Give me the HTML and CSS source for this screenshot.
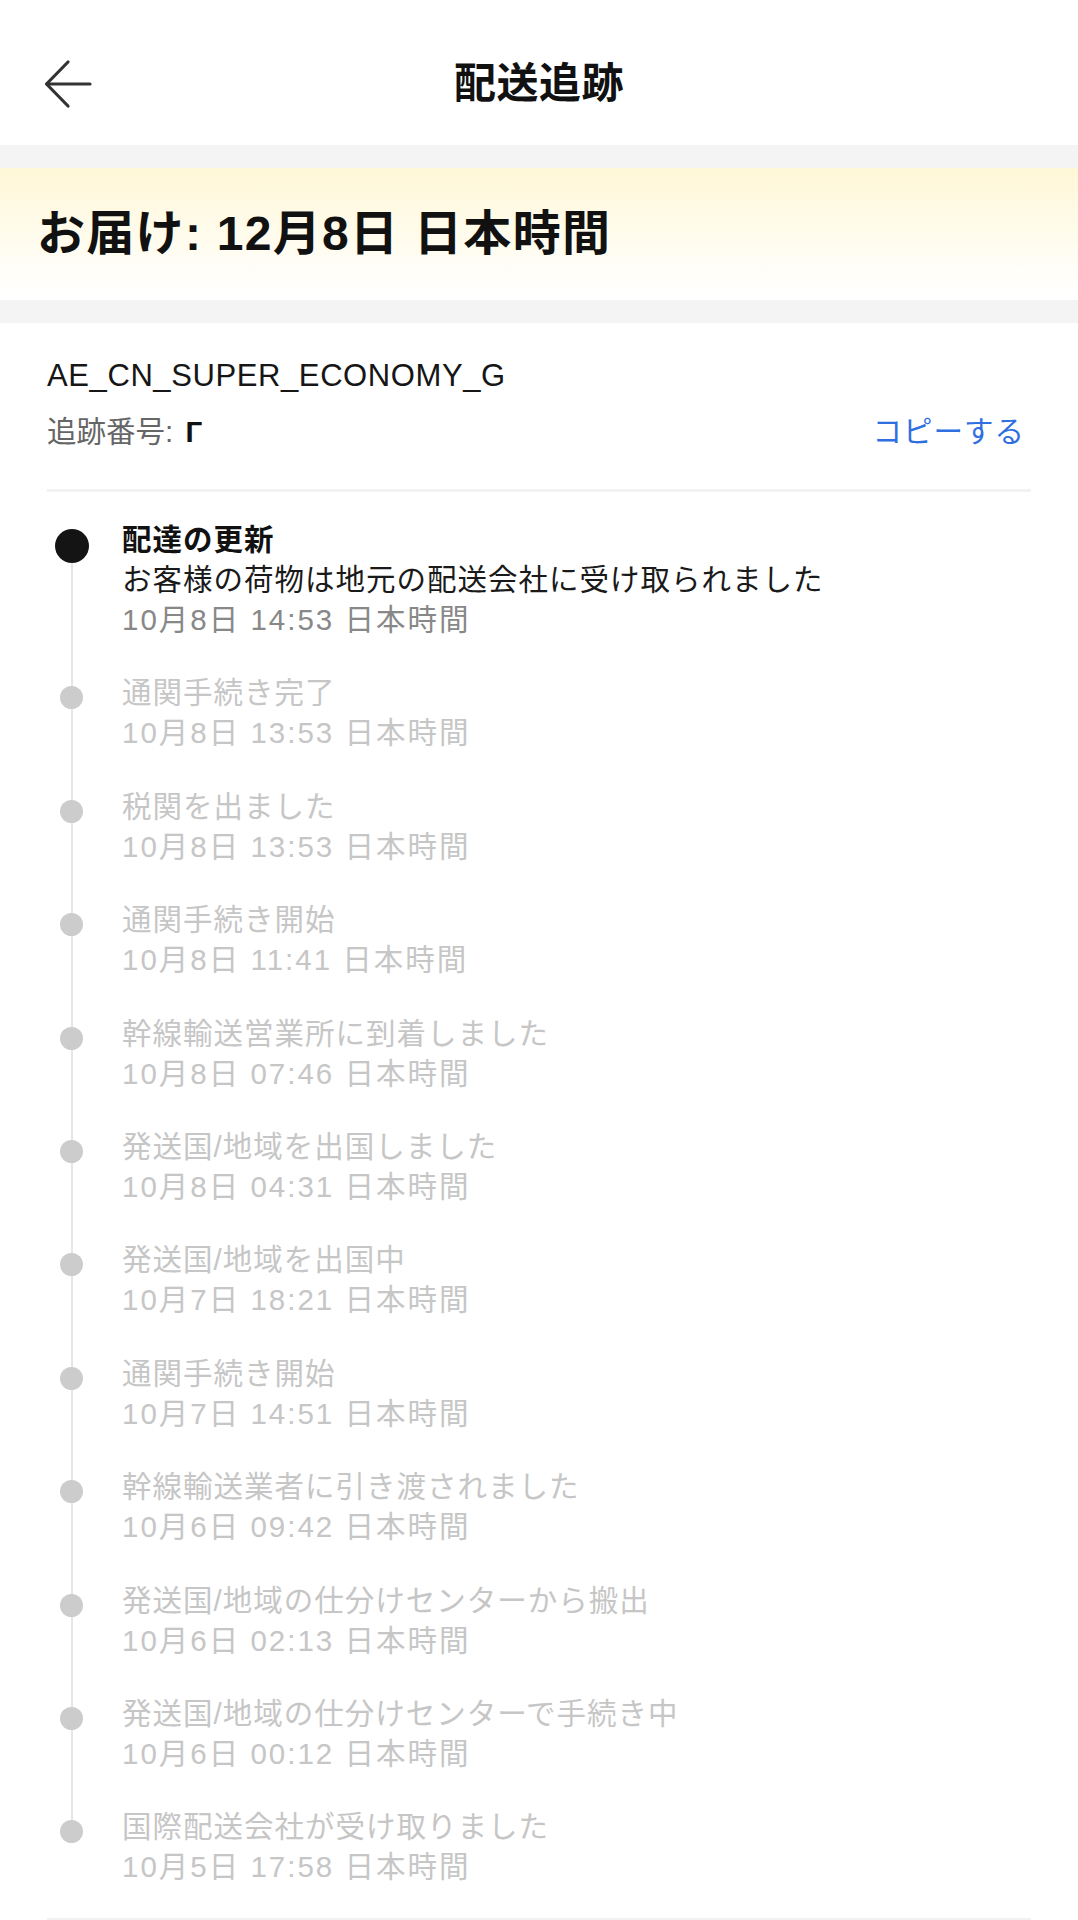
FILE: index.html
```html
<!DOCTYPE html>
<html lang="ja">
<head>
<meta charset="utf-8">
<title>配送追跡</title>
<link rel="stylesheet" href="styles.css">
</head>
<body>
<div class="page">
  <header class="topbar">
    <span class="back">
      <svg width="48" height="50" viewBox="0 0 48 50" fill="none" stroke="#333" stroke-width="3.2" stroke-linecap="round" stroke-linejoin="round">
        <path d="M46 25 H3"/>
        <path d="M24 3 L2.5 25 L24 47"/>
      </svg>
    </span>
    <h1 class="title">配送追跡</h1>
    <span></span>
  </header>
  <div class="band"></div>
  <section class="banner">
    <h2 class="eta">お届け: 12月8日 日本時間</h2>
  </section>
  <div class="band"></div>
  <section class="card">
    <div class="carrier">AE_CN_SUPER_ECONOMY_G</div>
    <div class="tracking">
      <span class="tno">追跡番号: <b class="redact">Г</b></span>
      <span class="copy">コピーする</span>
    </div>
    <div class="divider"></div>
    <ul class="timeline">
      <li class="item current">
        <div class="rail"><span class="dot"></span></div>
        <div class="content">
          <div class="line head">配達の更新</div>
          <div class="line desc">お客様の荷物は地元の配送会社に受け取られました</div>
          <div class="line date">10月8日 14:53 日本時間</div>
        </div>
      </li>
      <li class="item">
        <div class="rail"><span class="dot"></span></div>
        <div class="content">
          <div class="line">通関手続き完了</div>
          <div class="line date">10月8日 13:53 日本時間</div>
        </div>
      </li>
      <li class="item">
        <div class="rail"><span class="dot"></span></div>
        <div class="content">
          <div class="line">税関を出ました</div>
          <div class="line date">10月8日 13:53 日本時間</div>
        </div>
      </li>
      <li class="item">
        <div class="rail"><span class="dot"></span></div>
        <div class="content">
          <div class="line">通関手続き開始</div>
          <div class="line date">10月8日 11:41 日本時間</div>
        </div>
      </li>
      <li class="item">
        <div class="rail"><span class="dot"></span></div>
        <div class="content">
          <div class="line">幹線輸送営業所に到着しました</div>
          <div class="line date">10月8日 07:46 日本時間</div>
        </div>
      </li>
      <li class="item">
        <div class="rail"><span class="dot"></span></div>
        <div class="content">
          <div class="line">発送国/地域を出国しました</div>
          <div class="line date">10月8日 04:31 日本時間</div>
        </div>
      </li>
      <li class="item">
        <div class="rail"><span class="dot"></span></div>
        <div class="content">
          <div class="line">発送国/地域を出国中</div>
          <div class="line date">10月7日 18:21 日本時間</div>
        </div>
      </li>
      <li class="item">
        <div class="rail"><span class="dot"></span></div>
        <div class="content">
          <div class="line">通関手続き開始</div>
          <div class="line date">10月7日 14:51 日本時間</div>
        </div>
      </li>
      <li class="item">
        <div class="rail"><span class="dot"></span></div>
        <div class="content">
          <div class="line">幹線輸送業者に引き渡されました</div>
          <div class="line date">10月6日 09:42 日本時間</div>
        </div>
      </li>
      <li class="item">
        <div class="rail"><span class="dot"></span></div>
        <div class="content">
          <div class="line">発送国/地域の仕分けセンターから搬出</div>
          <div class="line date">10月6日 02:13 日本時間</div>
        </div>
      </li>
      <li class="item">
        <div class="rail"><span class="dot"></span></div>
        <div class="content">
          <div class="line">発送国/地域の仕分けセンターで手続き中</div>
          <div class="line date">10月6日 00:12 日本時間</div>
        </div>
      </li>
      <li class="item">
        <div class="rail"><span class="dot"></span></div>
        <div class="content">
          <div class="line">国際配送会社が受け取りました</div>
          <div class="line date">10月5日 17:58 日本時間</div>
        </div>
      </li>
    </ul>
    <div class="divider end"></div>
  </section>
</div>
</body>
</html>
```

FILE: styles.css
```css
* {
  box-sizing: border-box;
}

html, body {
  margin: 0;
  padding: 0;
  background: #ffffff;
}

body {
  font-family: "Liberation Sans", "Noto Sans CJK JP", sans-serif;
  color: #111111;
}

.page {
  width: 1078px;
  min-height: 1920px;
  background: #ffffff;
  overflow: hidden;
}

.topbar {
  height: 145px;
  padding: 23px 44px 0;
  display: grid;
  grid-template-columns: 1fr auto 1fr;
  align-items: center;
}

.back {
  display: flex;
  align-items: center;
  width: 48px;
  height: 50px;
}

.back svg {
  display: block;
}

.title {
  margin: 0;
  font-size: 42px;
  font-weight: 700;
  line-height: 50px;
  letter-spacing: 0.5px;
  color: #111111;
}

.band {
  height: 23px;
  background: #f4f4f4;
}

.banner {
  height: 132px;
  padding-left: 37px;
  display: flex;
  align-items: center;
  background: linear-gradient(180deg, #fff7d7 0%, #fffbea 45%, #fffef9 80%, #ffffff 100%);
}

.eta {
  margin: 0;
  font-size: 48px;
  font-weight: 700;
  line-height: 60px;
  letter-spacing: 1.3px;
  color: #111111;
}

.card {
  padding: 33px 47px 0;
}

.carrier {
  font-size: 31px;
  line-height: 40px;
  letter-spacing: 0.6px;
  color: #161616;
}

.tracking {
  margin-top: 16px;
  display: flex;
  justify-content: space-between;
  align-items: center;
  line-height: 40px;
  font-size: 29.5px;
}

.tno {
  color: #666666;
}

.redact {
  color: #111111;
  font-weight: 700;
  margin-left: 4px;
  font-family: "Liberation Sans", sans-serif;
}

.copy {
  color: #2f6fe0;
  letter-spacing: 1px;
  padding-right: 6px;
}

.divider {
  height: 3px;
  background: #f2f2f2;
  margin-top: 37px;
}

.divider.end {
  margin-top: -3px;
}

.timeline {
  list-style: none;
  margin: 0;
  padding: 28px 0 0;
}

.item {
  position: relative;
  display: flex;
  padding-bottom: 33.4px;
}

.item::before {
  content: "";
  position: absolute;
  left: 23.5px;
  top: 25px;
  width: 2px;
  height: 100%;
  background: #e6e6e6;
}

.item:last-child::before {
  display: none;
}

.rail {
  flex: none;
  width: 49px;
  display: flex;
  justify-content: center;
  align-items: flex-start;
  position: relative;
  z-index: 1;
}

.dot {
  display: block;
  width: 23px;
  height: 23px;
  margin-top: 13px;
  border-radius: 50%;
  background: #cccccc;
}

.current .dot {
  width: 34px;
  height: 34px;
  margin-top: 9px;
  background: #141414;
}

.content {
  margin-left: 26px;
}

.line {
  font-size: 29.5px;
  line-height: 40px;
  letter-spacing: 1px;
  color: #c6c6c6;
  white-space: nowrap;
}

.line.date {
  letter-spacing: 2px;
}

.current .head {
  color: #111111;
  font-weight: 700;
}

.current .desc {
  color: #1a1a1a;
}

.current .date {
  color: #888888;
}
```
